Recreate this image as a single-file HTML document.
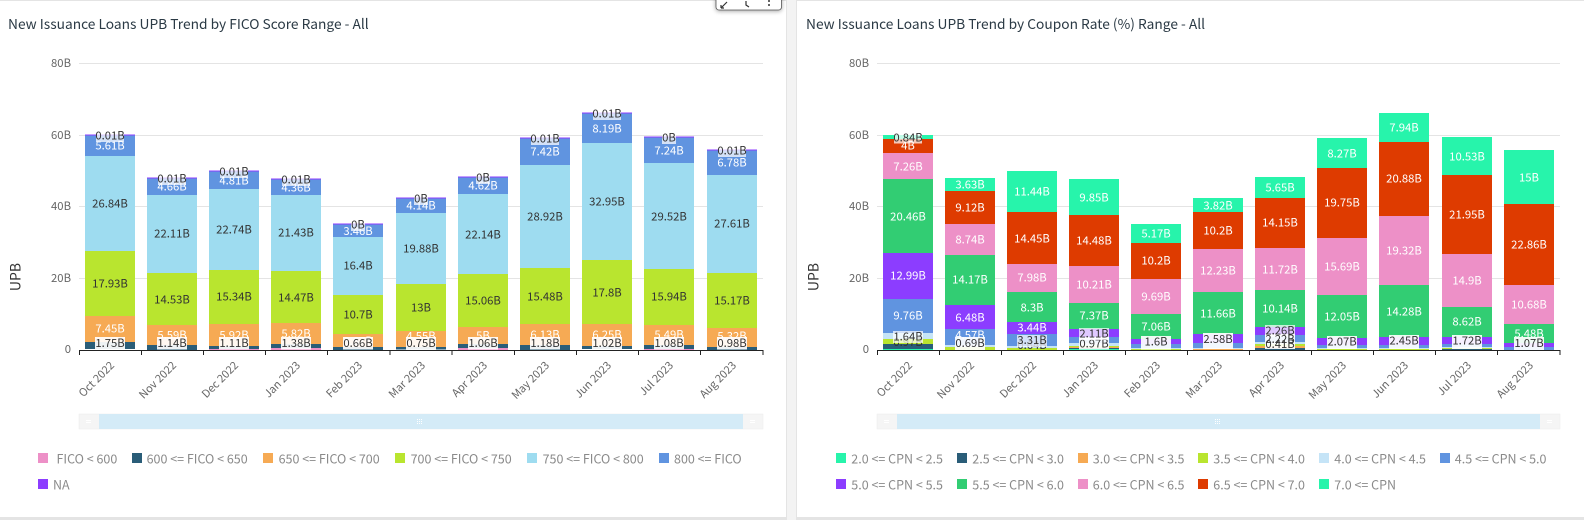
<!DOCTYPE html>
<html><head><meta charset="utf-8"><title>UPB Trend</title>
<style>
html,body{margin:0;padding:0;background:#f3f3f3;width:1584px;height:520px;overflow:hidden}
svg{display:block;font-family:"Noto Sans CJK JP","Liberation Sans",sans-serif}
.ttl{font-size:13.75px;fill:#2b3a45}
.ax{font-size:11.3px;fill:#666;text-anchor:end;dominant-baseline:central}
.xl{font-size:11px;fill:#666;text-anchor:end}
.yt{font-size:14px;fill:#333;text-anchor:middle}
.lg{font-size:12.5px;fill:#8a8a8a;dominant-baseline:central}
text.w,text.d{font-size:11.3px;text-anchor:middle;dominant-baseline:central}
.w{fill:#fff}.d{fill:#333}
.b{fill:#fff;opacity:.92}.t{fill:#fff;opacity:.72}
</style></head><body>
<svg width="1584" height="520" viewBox="0 0 1584 520" xmlns="http://www.w3.org/2000/svg">
<rect width="1584" height="520" fill="#f3f3f3"/>
<rect x="0" y="1" width="786" height="516" fill="#fff"/>
<rect x="786" y="0" width="1" height="520" fill="#e4e4e4"/>
<rect x="0" y="517" width="787" height="3" fill="#e4e4e4"/>
<rect x="797" y="1" width="787" height="516" fill="#fff"/>
<rect x="796" y="0" width="1" height="520" fill="#e4e4e4"/>
<rect x="796" y="517" width="788" height="3" fill="#e4e4e4"/>
<rect x="796" y="0" width="788" height="1" fill="#e4e4e4"/>
<rect x="0" y="0" width="787" height="1" fill="#e4e4e4"/>

<rect x="716" y="-6" width="65.500" height="16" rx="3" fill="#fff" stroke="#555" stroke-width=".8" style="filter:drop-shadow(0 1px 2px rgba(0,0,0,.35))"/>
<path d="M721 8l6-6M721 8h3M721 8V5M746 1v4l3 2" stroke="#333" stroke-width="1.200" fill="none"/>
<circle cx="769" cy="1" r="1" fill="#333"/><circle cx="769" cy="5" r="1" fill="#333"/>

<text class="ttl" x="8" y="29">New Issuance Loans UPB Trend by FICO Score Range - All</text>
<text class="ttl" x="806" y="29">New Issuance Loans UPB Trend by Coupon Rate (%) Range - All</text>

<!-- left chart grid -->
<path d="M79 63.500H763M79 135.500H763M79 206.500H763M79 278.500H763" stroke="#e4e4e4" stroke-width="1"/>
<text class="ax" x="71" y="63">80B</text><text class="ax" x="71" y="135">60B</text><text class="ax" x="71" y="206">40B</text><text class="ax" x="71" y="278">20B</text><text class="ax" x="71" y="349">0</text>
<text class="yt" transform="translate(20.500,277) rotate(-90)">UPB</text>

<!-- left bars -->
<path fill="#6094E0" d="M85 135h50V156h-50zM147 178h50V195h-50zM209 171h50V189h-50zM271 179h50V195h-50zM333 224h50V237h-50zM396 198h50V213h-50zM458 177h50V194h-50zM520 138h50V165h-50zM582 113h50V143h-50zM644 137h50V163h-50zM707 150h50V175h-50z"/>
<path fill="#9EDCF0" d="M85 156h50V251h-50zM147 195h50V273h-50zM209 189h50V270h-50zM271 195h50V271h-50zM333 237h50V295h-50zM396 213h50V284h-50zM458 194h50V274h-50zM520 165h50V268h-50zM582 143h50V260h-50zM644 163h50V269h-50zM707 175h50V273h-50z"/>
<path fill="#B9E52F" d="M85 251h50V316h-50zM147 273h50V325h-50zM209 270h50V324h-50zM271 271h50V323h-50zM333 295h50V334h-50zM396 284h50V331h-50zM458 274h50V327h-50zM520 268h50V324h-50zM582 260h50V324h-50zM644 269h50V325h-50zM707 273h50V328h-50z"/>
<path fill="#F6AA54" d="M85 316h50V342h-50zM147 325h50V345h-50zM209 324h50V346h-50zM271 323h50V344h-50zM333 334h50V347h-50zM396 331h50V347h-50zM458 327h50V344h-50zM520 324h50V345h-50zM582 324h50V346h-50zM644 325h50V345h-50zM707 328h50V347h-50z"/>
<path fill="#2A5D78" d="M85 342h50V349h-50zM147 345h50V350h-50zM209 346h50V349h-50zM271 344h50V348h-50zM333 347h50V350h-50zM396 347h50V349.500h-50zM458 344h50V348h-50zM520 345h50V350h-50zM582 346h50V349h-50zM644 345h50V349h-50zM707 347h50V350h-50z"/>
<path fill="#ED90C7" d="M209 349h50v1h-50zM271 348h50v2h-50zM458 348h50v2h-50zM644 349h50v1h-50z"/>
<path fill="#8C3DFF" d="M85 134.500h50v1h-50zM147 177.500h50v1h-50zM209 170.500h50v1h-50zM271 178.500h50v1h-50zM333 223.500h50v1h-50zM396 197.500h50v1h-50zM458 176.500h50v1h-50zM520 137.500h50v1h-50zM582 112.500h50v1h-50zM644 136.500h50v1h-50zM707 149.500h50v1h-50z"/>

<!-- left labels -->
<text class="w" x="110" y="145.700">5.61B</text><text class="d" x="110" y="203.500">26.84B</text><text class="d" x="110" y="283.500">17.93B</text><text class="w" x="110" y="328.500">7.45B</text>
<text class="w" x="172" y="186.700">4.66B</text><text class="d" x="172" y="233.500">22.11B</text><text class="d" x="172" y="299.500">14.53B</text><text class="w" x="172" y="335">5.59B</text>
<text class="w" x="234" y="180.700">4.81B</text><text class="d" x="234" y="229.500">22.74B</text><text class="d" x="234" y="296.500">15.34B</text><text class="w" x="234" y="335">5.92B</text>
<text class="w" x="296" y="187.700">4.36B</text><text class="d" x="296" y="232.500">21.43B</text><text class="d" x="296" y="297.500">14.47B</text><text class="w" x="296" y="333.500">5.82B</text>
<text class="w" x="358" y="231">3.46B</text><text class="d" x="358" y="265.500">16.4B</text><text class="d" x="358" y="314.500">10.7B</text><text class="w" x="358" y="341">3.67B</text>
<text class="w" x="421" y="205.500">4.14B</text><text class="d" x="421" y="248.500">19.88B</text><text class="d" x="421" y="307.500">13B</text><text class="w" x="421" y="336">4.55B</text>
<text class="w" x="483" y="185.500">4.62B</text><text class="d" x="483" y="234.500">22.14B</text><text class="d" x="483" y="300.500">15.06B</text><text class="w" x="483" y="335.500">5B</text>
<text class="w" x="545" y="151.500">7.42B</text><text class="d" x="545" y="216.500">28.92B</text><text class="d" x="545" y="296.500">15.48B</text><text class="w" x="545" y="334.500">6.13B</text>
<text class="w" x="607" y="128.500">8.19B</text><text class="d" x="607" y="201.500">32.95B</text><text class="d" x="607" y="292.500">17.8B</text><text class="w" x="607" y="334.500">6.25B</text>
<text class="w" x="669" y="150.500">7.24B</text><text class="d" x="669" y="216.500">29.52B</text><text class="d" x="669" y="296.500">15.94B</text><text class="w" x="669" y="334.500">5.49B</text>
<text class="w" x="732" y="162.500">6.78B</text><text class="d" x="732" y="223.500">27.61B</text><text class="d" x="732" y="300.500">15.17B</text><text class="w" x="732" y="336">5.32B</text>

<!-- left top labels with translucent box -->
<g>
<rect class="t" x="96" y="130" width="28" height="12"/><text class="d" x="110" y="135.700">0.01B</text>
<rect class="t" x="158" y="173" width="28" height="12"/><text class="d" x="172" y="178.700">0.01B</text>
<rect class="t" x="220" y="166" width="28" height="12"/><text class="d" x="234" y="171.700">0.01B</text>
<rect class="t" x="282" y="174" width="28" height="12"/><text class="d" x="296" y="179.700">0.01B</text>
<rect class="t" x="351" y="219" width="14" height="12"/><text class="d" x="358" y="224.500">0B</text>
<rect class="t" x="414" y="193" width="14" height="12"/><text class="d" x="421" y="198.500">0B</text>
<rect class="t" x="476" y="172" width="14" height="12"/><text class="d" x="483" y="177.500">0B</text>
<rect class="t" x="531" y="133" width="28" height="12"/><text class="d" x="545" y="138.500">0.01B</text>
<rect class="t" x="593" y="108" width="28" height="12"/><text class="d" x="607" y="113.500">0.01B</text>
<rect class="t" x="662" y="132" width="14" height="12"/><text class="d" x="669" y="137.500">0B</text>
<rect class="t" x="718" y="145" width="28" height="12"/><text class="d" x="732" y="150.500">0.01B</text>
</g>
<!-- left bottom labels with box -->
<g>
<rect class="b" x="95" y="337" width="30" height="12.500"/><text class="d" x="110" y="343">1.75B</text>
<rect class="b" x="157" y="337" width="30" height="12.500"/><text class="d" x="172" y="343">1.14B</text>
<rect class="b" x="219" y="337" width="30" height="12.500"/><text class="d" x="234" y="343">1.11B</text>
<rect class="b" x="281" y="337" width="30" height="12.500"/><text class="d" x="296" y="343">1.38B</text>
<rect class="b" x="343" y="337" width="30" height="12.500"/><text class="d" x="358" y="343">0.66B</text>
<rect class="b" x="406" y="337" width="30" height="12.500"/><text class="d" x="421" y="343">0.75B</text>
<rect class="b" x="468" y="337" width="30" height="12.500"/><text class="d" x="483" y="343">1.06B</text>
<rect class="b" x="530" y="337" width="30" height="12.500"/><text class="d" x="545" y="343">1.18B</text>
<rect class="b" x="592" y="337" width="30" height="12.500"/><text class="d" x="607" y="343">1.02B</text>
<rect class="b" x="654" y="337" width="30" height="12.500"/><text class="d" x="669" y="343">1.08B</text>
<rect class="b" x="717" y="337" width="30" height="12.500"/><text class="d" x="732" y="343">0.98B</text>
</g>

<!-- left axis -->
<path d="M79.300 350.500H763.500M79.500 350v5M141.500 350v5M203.500 350v5M265.500 350v5M327.500 350v5M390 350v5M452 350v5M514.500 350v5M576.500 350v5M638.500 350v5M700.500 350v5M763 350v5" stroke="#222" stroke-width="1" fill="none"/>
<text class="xl" transform="translate(115,366) rotate(-45)">Oct 2022</text>
<text class="xl" transform="translate(177,366) rotate(-45)">Nov 2022</text>
<text class="xl" transform="translate(239,366) rotate(-45)">Dec 2022</text>
<text class="xl" transform="translate(301,366) rotate(-45)">Jan 2023</text>
<text class="xl" transform="translate(363,366) rotate(-45)">Feb 2023</text>
<text class="xl" transform="translate(426,366) rotate(-45)">Mar 2023</text>
<text class="xl" transform="translate(488,366) rotate(-45)">Apr 2023</text>
<text class="xl" transform="translate(550,366) rotate(-45)">May 2023</text>
<text class="xl" transform="translate(612,366) rotate(-45)">Jun 2023</text>
<text class="xl" transform="translate(674,366) rotate(-45)">Jul 2023</text>
<text class="xl" transform="translate(737,366) rotate(-45)">Aug 2023</text>

<!-- left scroll -->
<rect x="79" y="414" width="684" height="15" fill="#f5f5f5" stroke="#ececec" stroke-width=".5"/>
<rect x="99" y="414" width="644" height="15" fill="#d4ebf7"/>
<path d="M86 420.500h5M86 422.500h5M750 420.500h5M750 422.500h5" stroke="#fff"/>
<path d="M417 419.500h5M417 421.500h5M417 423.500h5" stroke="#fff" stroke-dasharray="1 1"/>

<!-- left legend -->
<rect x="38" y="453" width="10" height="10" fill="#ED90C7"/><text class="lg" x="56.500" y="458">FICO &lt; 600</text>
<rect x="132" y="453" width="10" height="10" fill="#2A5D78"/><text class="lg" x="146.600" y="458">600 &lt;= FICO &lt; 650</text>
<rect x="263" y="453" width="10" height="10" fill="#F6AA54"/><text class="lg" x="278.600" y="458">650 &lt;= FICO &lt; 700</text>
<rect x="395" y="453" width="10" height="10" fill="#B9E52F"/><text class="lg" x="410.600" y="458">700 &lt;= FICO &lt; 750</text>
<rect x="527" y="453" width="10" height="10" fill="#9EDCF0"/><text class="lg" x="542.600" y="458">750 &lt;= FICO &lt; 800</text>
<rect x="659" y="453" width="10" height="10" fill="#6094E0"/><text class="lg" x="674" y="458">800 &lt;= FICO</text>
<rect x="38" y="479" width="10" height="10" fill="#8C3DFF"/><text class="lg" x="53" y="484">NA</text>

<!-- right chart grid -->
<path d="M877 63.500H1560M877 135.500H1560M877 206.500H1560M877 278.500H1560" stroke="#e4e4e4" stroke-width="1"/>
<text class="ax" x="869" y="63">80B</text><text class="ax" x="869" y="135">60B</text><text class="ax" x="869" y="206">40B</text><text class="ax" x="869" y="278">20B</text><text class="ax" x="869" y="349">0</text>
<text class="yt" transform="translate(818.500,277) rotate(-90)">UPB</text>

<!-- right bars -->
<path fill="#27F4AB" d="M883 135h50V139h-50zM945 178h50V191h-50zM1007 171h50V212h-50zM1069 179h50V215h-50zM1131 224h50V243h-50zM1193 198h50V212h-50zM1255 177h50V198h-50zM1317 138h50V168h-50zM1379 113h50V142h-50zM1442 137h50V175h-50zM1504 150h50V204h-50zM883 349h50v1h-50zM1069 349h50v1h-50z"/>
<path fill="#DE3B00" d="M883 139h50V153h-50zM945 191h50V224h-50zM1007 212h50V264h-50zM1069 215h50V266h-50zM1131 243h50V279h-50zM1193 212h50V249h-50zM1255 198h50V248h-50zM1317 168h50V238h-50zM1379 142h50V216h-50zM1442 175h50V254h-50zM1504 204h50V285h-50z"/>
<path fill="#ED90C7" d="M883 153h50V179h-50zM945 224h50V255h-50zM1007 264h50V292h-50zM1069 266h50V303h-50zM1131 279h50V314h-50zM1193 249h50V292h-50zM1255 248h50V290h-50zM1317 238h50V295h-50zM1379 216h50V285h-50zM1442 254h50V307h-50zM1504 285h50V324h-50z"/>
<path fill="#32CD73" d="M883 179h50V253h-50zM945 255h50V305h-50zM1007 292h50V322h-50zM1069 303h50V329h-50zM1131 314h50V339h-50zM1193 292h50V334h-50zM1255 290h50V327h-50zM1317 295h50V338h-50zM1379 285h50V337h-50zM1442 307h50V337h-50zM1504 324h50V343h-50z"/>
<path fill="#8C3DFF" d="M883 253h50V299h-50zM945 305h50V329h-50zM1007 322h50V334h-50zM1069 329h50V337h-50zM1131 339h50V344h-50zM1193 334h50V343h-50zM1255 327h50V335h-50zM1317 338h50V345h-50zM1379 337h50V345h-50zM1442 337h50V344h-50zM1504 343h50V347h-50z"/>
<path fill="#6094E0" d="M883 299h50V333h-50zM945 329h50V345h-50zM1007 334h50V346h-50zM1069 337h50V343h-50zM1131 344h50V348h-50zM1193 343h50V348h-50zM1255 335h50V342h-50zM1317 345h50V348h-50zM1379 345h50V348h-50zM1442 344h50V347h-50zM1504 347h50V350h-50z"/>
<path fill="#C5E4F7" d="M883 333h50V339h-50zM945 345h50V347h-50zM1007 346h50V348h-50zM1069 343h50V346h-50zM1131 348h50V349h-50zM1193 348h50V349h-50zM1255 342h50V344h-50zM1317 348h50V349h-50zM1379 348h50V349h-50zM1442 347h50V348h-50z"/>
<path fill="#B9E52F" d="M883 339h50V344h-50zM945 347h50V350h-50zM1007 348h50V350h-50zM1069 346h50V347h-50zM1131 349h50V350h-50zM1255 344h50V346h-50zM1317 349h50V350h-50zM1379 349h50V350h-50zM1442 348h50V349h-50z"/>
<path fill="#F6AA54" d="M1069 347h50V348h-50zM1193 349h50V350h-50zM1255 346h50V348h-50z"/>
<path fill="#2A5D78" d="M883 344h50V349h-50zM1069 348h50V349h-50zM1255 348h50V350h-50zM1442 349h50V350h-50z"/>

<!-- right labels -->
<text class="w" x="908" y="145.700">4B</text><text class="w" x="908" y="166.500">7.26B</text><text class="w" x="908" y="216.500">20.46B</text><text class="w" x="908" y="275.500">12.99B</text><text class="w" x="908" y="315.500">9.76B</text><text class="d" x="908" y="342">0.97B</text>
<text class="w" x="970" y="184.500">3.63B</text><text class="w" x="970" y="207.500">9.12B</text><text class="w" x="970" y="239.500">8.74B</text><text class="w" x="970" y="279.500">14.17B</text><text class="w" x="970" y="317.500">6.48B</text><text class="w" x="970" y="335">4.57B</text>
<text class="w" x="1032" y="191.500">11.44B</text><text class="w" x="1032" y="238.500">14.45B</text><text class="w" x="1032" y="277.500">7.98B</text><text class="w" x="1032" y="307.500">8.3B</text><text class="w" x="1032" y="327.500">3.44B</text><text class="d" x="1032" y="345">0.64B</text>
<text class="w" x="1094" y="197.500">9.85B</text><text class="w" x="1094" y="240.500">14.48B</text><text class="w" x="1094" y="284.500">10.21B</text><text class="w" x="1094" y="315.500">7.37B</text>
<text class="w" x="1156" y="233.500">5.17B</text><text class="w" x="1156" y="260.500">10.2B</text><text class="w" x="1156" y="296.500">9.69B</text><text class="w" x="1156" y="326.500">7.06B</text>
<text class="w" x="1218" y="205.500">3.82B</text><text class="w" x="1218" y="230.500">10.2B</text><text class="w" x="1218" y="270.500">12.23B</text><text class="w" x="1218" y="313.500">11.66B</text>
<text class="w" x="1280" y="187.500">5.65B</text><text class="w" x="1280" y="222.500">14.15B</text><text class="w" x="1280" y="269.500">11.72B</text><text class="w" x="1280" y="308.500">10.14B</text>
<text class="w" x="1342" y="153.500">8.27B</text><text class="w" x="1342" y="202.500">19.75B</text><text class="w" x="1342" y="266.500">15.69B</text><text class="w" x="1342" y="316.500">12.05B</text>
<text class="w" x="1404" y="127.500">7.94B</text><text class="w" x="1404" y="178.500">20.88B</text><text class="w" x="1404" y="250.500">19.32B</text><text class="w" x="1404" y="311.500">14.28B</text>
<text class="w" x="1467" y="156.500">10.53B</text><text class="w" x="1467" y="214.500">21.95B</text><text class="w" x="1467" y="280.500">14.9B</text><text class="w" x="1467" y="321.500">8.62B</text>
<text class="w" x="1529" y="177.500">15B</text><text class="w" x="1529" y="244.500">22.86B</text><text class="w" x="1529" y="304.500">10.68B</text><text class="w" x="1529" y="333.500">5.48B</text>

<!-- right boxed labels -->
<rect class="t" x="894" y="132" width="28" height="11.500"/><text class="d" x="908" y="137.700">0.84B</text>
<rect class="t" x="893" y="331" width="30" height="12"/><text class="d" x="908" y="336.500">1.64B</text>
<rect class="b" x="955" y="337" width="30" height="13"/><text class="d" x="970" y="343">0.69B</text>
<rect class="t" x="1017" y="335" width="30" height="12"/><text class="d" x="1032" y="340">3.31B</text>
<rect class="b" x="1079" y="337" width="30" height="12.500"/><text class="d" x="1094" y="343.500">0.97B</text>
<rect class="t" x="1079" y="328" width="30" height="12"/><text class="d" x="1094" y="333.500">2.11B</text>
<rect class="b" x="1141" y="336" width="30" height="13.500"/><text class="d" x="1156" y="341.500">1.6B</text>
<rect class="b" x="1203" y="333" width="30" height="16"/><text class="d" x="1218" y="339">2.58B</text>
<rect class="b" x="1265" y="334" width="30" height="15"/><text class="d" x="1280" y="344">0.41B</text>
<rect class="t" x="1265" y="325" width="30" height="12"/><text class="d" x="1280" y="330.500">2.26B</text>
<text class="d" x="1280" y="339">2.22B</text>
<rect class="b" x="1327" y="336" width="30" height="13"/><text class="d" x="1342" y="341.500">2.07B</text>
<rect class="b" x="1389" y="335" width="30" height="14"/><text class="d" x="1404" y="340.500">2.45B</text>
<rect class="b" x="1452" y="335" width="30" height="14"/><text class="d" x="1467" y="340.500">1.72B</text>
<rect class="b" x="1514" y="337" width="30" height="13"/><text class="d" x="1529" y="343">1.07B</text>

<!-- right axis -->
<path d="M877 350.500H1560.500M877.500 350v5M939.500 350v5M1001.500 350v5M1063.500 350v5M1125.500 350v5M1187.500 350v5M1249.500 350v5M1311.500 350v5M1373.500 350v5M1435.500 350v5M1497.500 350v5M1560 350v5" stroke="#222" stroke-width="1" fill="none"/>
<text class="xl" transform="translate(913,366) rotate(-45)">Oct 2022</text>
<text class="xl" transform="translate(975,366) rotate(-45)">Nov 2022</text>
<text class="xl" transform="translate(1037,366) rotate(-45)">Dec 2022</text>
<text class="xl" transform="translate(1099,366) rotate(-45)">Jan 2023</text>
<text class="xl" transform="translate(1161,366) rotate(-45)">Feb 2023</text>
<text class="xl" transform="translate(1223,366) rotate(-45)">Mar 2023</text>
<text class="xl" transform="translate(1285,366) rotate(-45)">Apr 2023</text>
<text class="xl" transform="translate(1347,366) rotate(-45)">May 2023</text>
<text class="xl" transform="translate(1409,366) rotate(-45)">Jun 2023</text>
<text class="xl" transform="translate(1472,366) rotate(-45)">Jul 2023</text>
<text class="xl" transform="translate(1534,366) rotate(-45)">Aug 2023</text>

<!-- right scroll -->
<rect x="877" y="414" width="683" height="15" fill="#f5f5f5" stroke="#ececec" stroke-width=".5"/>
<rect x="897" y="414" width="643" height="15" fill="#d4ebf7"/>
<path d="M884 420.500h5M884 422.500h5M1547 420.500h5M1547 422.500h5" stroke="#fff"/>
<path d="M1215 419.500h5M1215 421.500h5M1215 423.500h5" stroke="#fff" stroke-dasharray="1 1"/>

<!-- right legend -->
<rect x="836" y="453" width="10" height="10" fill="#27F4AB"/><text class="lg" x="851.300" y="458">2.0 &lt;= CPN &lt; 2.5</text>
<rect x="957" y="453" width="10" height="10" fill="#2A5D78"/><text class="lg" x="972.300" y="458">2.5 &lt;= CPN &lt; 3.0</text>
<rect x="1078" y="453" width="10" height="10" fill="#F6AA54"/><text class="lg" x="1092.800" y="458">3.0 &lt;= CPN &lt; 3.5</text>
<rect x="1198" y="453" width="10" height="10" fill="#B9E52F"/><text class="lg" x="1213.300" y="458">3.5 &lt;= CPN &lt; 4.0</text>
<rect x="1319" y="453" width="10" height="10" fill="#C5E4F7"/><text class="lg" x="1334.300" y="458">4.0 &lt;= CPN &lt; 4.5</text>
<rect x="1440" y="453" width="10" height="10" fill="#6094E0"/><text class="lg" x="1454.800" y="458">4.5 &lt;= CPN &lt; 5.0</text>
<rect x="836" y="479" width="10" height="10" fill="#8C3DFF"/><text class="lg" x="851.300" y="484">5.0 &lt;= CPN &lt; 5.5</text>
<rect x="957" y="479" width="10" height="10" fill="#32CD73"/><text class="lg" x="972.300" y="484">5.5 &lt;= CPN &lt; 6.0</text>
<rect x="1078" y="479" width="10" height="10" fill="#ED90C7"/><text class="lg" x="1092.800" y="484">6.0 &lt;= CPN &lt; 6.5</text>
<rect x="1198" y="479" width="10" height="10" fill="#DE3B00"/><text class="lg" x="1213.300" y="484">6.5 &lt;= CPN &lt; 7.0</text>
<rect x="1319" y="479" width="10" height="10" fill="#27F4AB"/><text class="lg" x="1334.300" y="484">7.0 &lt;= CPN</text>
</svg>
</body></html>
